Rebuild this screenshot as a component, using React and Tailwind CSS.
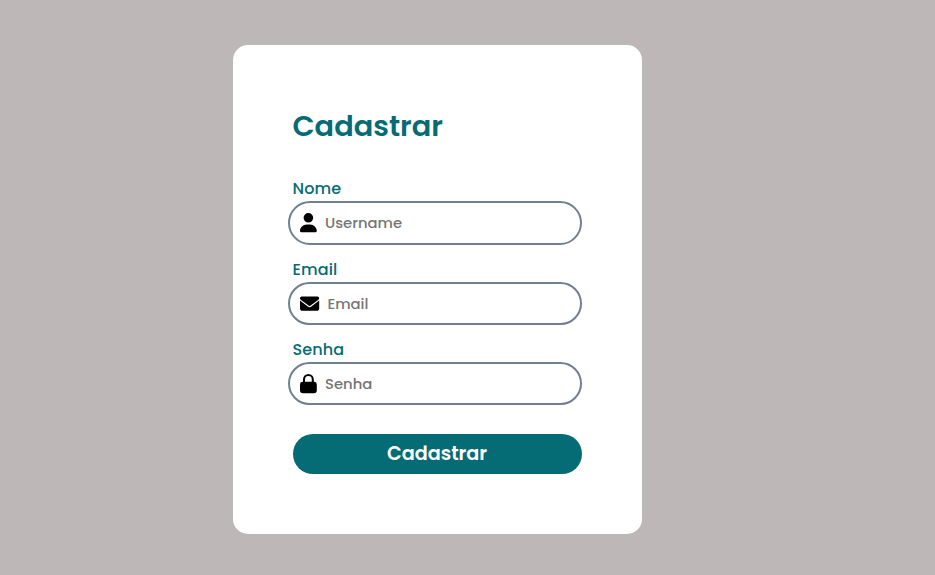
import { FaUser, FaEnvelope } from "react-icons/fa6";

function LockIcon({ className }) {
  return (
    <svg viewBox="0 0 448 512" fill="currentColor" className={className} aria-hidden="true">
      <path d="M64 208H384Q448 216 448 280V432Q448 512 368 512H80Q0 512 0 432V280Q0 216 64 208Z" />
      <path d="M107 230V144a117 117 0 0 1 234 0v86" fill="none" stroke="currentColor" strokeWidth="54" />
    </svg>
  );
}

const fields = [
  { label: "Nome", placeholder: "Username", type: "text", Icon: FaUser, box: "h-[44px]", iconWidth: "w-[16.8px]", inputPad: "pb-[2px]" },
  { label: "Email", placeholder: "Email", type: "email", Icon: FaEnvelope, box: "h-[43px]", iconWidth: "w-[19.2px]", inputPad: "pb-0" },
  { label: "Senha", placeholder: "Senha", type: "password", Icon: LockIcon, box: "h-[43px]", iconWidth: "w-[16.8px]", inputPad: "pb-0" },
];

function Field({ label, placeholder, type, Icon, box, iconWidth, inputPad }) {
  return (
    <div className="mb-[13.2px]">
      <label className="block h-6 text-[16px] leading-6 font-medium tracking-[0.1px] text-[#056b75]">{label}</label>
      <div className={`-ml-[5px] flex items-center rounded-full border-2 border-[#708090] pl-[10px] ${box}`}>
        <Icon className={`h-[19.2px] shrink-0 overflow-visible text-black ${iconWidth}`} />
        <input
          type={type}
          placeholder={placeholder}
          className={`ml-[8.7px] h-[23px] min-w-0 flex-1 bg-transparent text-[14.8px] leading-[23px] font-medium outline-none placeholder:text-[#757575] ${inputPad}`}
        />
      </div>
    </div>
  );
}

export default function App() {
  return (
    <main className="h-screen overflow-hidden bg-[#bdb7b7] pt-[45px] pl-[232.5px] font-[Poppins,Inter,sans-serif]">
      <form className="h-[489px] w-[409px] rounded-[15px] bg-white px-[60px] pt-[60px]">
        <h1 className="h-[45px] text-[28.8px] leading-[42px] font-semibold whitespace-nowrap text-[#056b75]">Cadastrar</h1>
        <div className="mt-[27px]">
          {fields.map((field) => (
            <Field key={field.label} {...field} />
          ))}
        </div>
        <button type="button" className="mt-[15px] h-[40px] w-full rounded-full bg-[#056b75] text-[19.2px] leading-[38px] font-semibold text-white">
          Cadastrar
        </button>
      </form>
    </main>
  );
}
